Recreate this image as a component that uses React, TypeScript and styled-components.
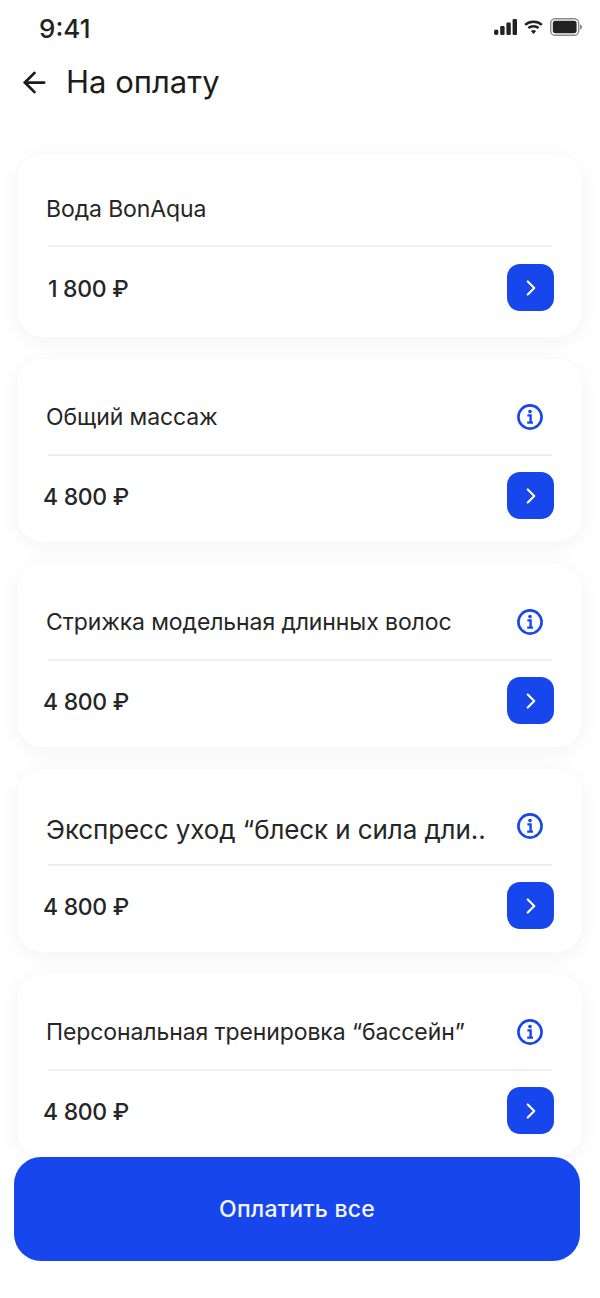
import styled, { createGlobalStyle } from 'styled-components';
import { ArrowLeft, ChevronRight } from 'lucide-react';

const GlobalStyle = createGlobalStyle`
  html, body {
    margin: 0;
    background: #fff;
  }
  * {
    box-sizing: border-box;
  }
`;

const Screen = styled.div`
  position: relative;
  width: 600px;
  height: 1298px;
  overflow: hidden;
  background: #fff;
  color: #1e1e1e;
  font-family: Inter, 'Noto Sans', sans-serif;
`;

const StatusBar = styled.div`
  display: flex;
  justify-content: space-between;
  align-items: center;
  height: 44px;
  padding: 14px 18px 0 39px;
`;

const Time = styled.span`
  font-size: 26px;
  font-weight: 500;
  line-height: 30px;
  color: #222;
`;

const StatusIcons = styled.div`
  display: flex;
  align-items: center;
  gap: 7px;
  margin-top: -4px;
`;

const Header = styled.div`
  display: flex;
  align-items: center;
  gap: 15px;
  height: 40px;
  margin-top: 18px;
  padding-left: 18px;
  color: #1c1c1c;
`;

const Title = styled.h1`
  margin: 0;
  font-size: 31px;
  font-weight: 400;
  line-height: 40px;
`;

const List = styled.div`
  display: flex;
  flex-direction: column;
  gap: 22px;
  margin-top: 52px;
  padding: 0 18px 0 17px;
`;

const Card = styled.div`
  height: 183px;
  padding: 0 30px 0 29px;
  border-radius: 26px;
  background: #fff;
  box-shadow: 0 4px 22px rgba(30, 40, 70, 0.055);
`;

const TopRow = styled.div<{ $height: number; $offset: number }>`
  display: flex;
  justify-content: space-between;
  align-items: center;
  height: ${({ $height }) => $height}px;
  margin-left: 2px;
  padding-top: ${({ $offset }) => $offset}px;
  border-bottom: 2px solid #efefef;
`;

const Name = styled.span<{ $size: number; $drop: number }>`
  margin: ${({ $drop }) => $drop}px 0 0 -2px;
  font-size: ${({ $size }) => $size}px;
  line-height: 30px;
  letter-spacing: -0.1px;
  white-space: nowrap;
  color: #262626;
`;

const InfoButton = styled.span`
  display: flex;
  margin-right: 8px;
  color: #1746ec;
`;

const BottomRow = styled.div<{ $gap: number }>`
  display: flex;
  justify-content: space-between;
  align-items: center;
  height: 47px;
  margin-top: ${({ $gap }) => $gap}px;
`;

const Price = styled.span<{ $indent: number }>`
  margin: 3px 0 0 ${({ $indent }) => $indent}px;
  font-size: 23px;
  font-weight: 500;
  line-height: 30px;
  letter-spacing: -0.3px;
  color: #262626;
`;

const GoButton = styled.button`
  display: flex;
  align-items: center;
  justify-content: center;
  width: 47px;
  height: 47px;
  margin-right: -2px;
  padding: 0;
  border: none;
  border-radius: 13px;
  background: #1746ec;
  color: #fff;
`;

const PayButton = styled.button`
  position: absolute;
  left: 14px;
  top: 1157px;
  width: 566px;
  height: 104px;
  border: none;
  border-radius: 27px;
  background: #1746ec;
  color: #f2f5ff;
  font-family: inherit;
  font-size: 23px;
  font-weight: 500;
  letter-spacing: 0.2px;
`;

const InfoIcon = () => (
  <svg width="28" height="28" viewBox="0 0 28 28" fill="none">
    <circle cx="14" cy="14" r="11.6" stroke="currentColor" strokeWidth="2.6" />
    <circle cx="14" cy="8.6" r="1.8" fill="currentColor" />
    <path d="M11.4 12.4H14.6V19.2M11.2 19.6H17" stroke="currentColor" strokeWidth="2.4" />
  </svg>
);

const SignalIcons = () => (
  <>
    <svg width="23" height="16" viewBox="0 0 23 16" fill="#222">
      <rect x="0" y="10.5" width="4.4" height="5.5" rx="2" />
      <rect x="6.2" y="7" width="4.4" height="9" rx="1.2" />
      <rect x="12.4" y="3.5" width="4.4" height="12.5" rx="1.2" />
      <rect x="18.6" y="0" width="4.4" height="16" rx="1.2" />
    </svg>
    <svg width="19" height="16" viewBox="0 0 20 15" fill="none" stroke="#222" strokeWidth="2.6">
      <path d="M1.2 5.2C6 .8 14 .8 18.8 5.2" />
      <path d="M4.6 8.6c3-2.6 7.8-2.6 10.8 0" />
      <path d="M10 14.6 7.6 11.8c1.4-1 3.4-1 4.8 0z" fill="#222" strokeWidth="0.6" />
    </svg>
    <svg width="32" height="18" viewBox="0 0 32 18" fill="none">
      <rect x="0.7" y="0.7" width="28" height="16.6" rx="4.6" stroke="#8a8a8a" strokeWidth="1.4" />
      <rect x="2.8" y="2.8" width="23.8" height="12.4" rx="2.6" fill="#222" />
      <path d="M30 6.2c1.2.4 2 1.5 2 2.8s-.8 2.4-2 2.8z" fill="#8a8a8a" />
    </svg>
  </>
);

type Bill = {
  name: string;
  price: string;
  nameSize: number;
  rowHeight: number;
  rowGap: number;
  offset: number;
  drop: number;
  indent: number;
  info: boolean;
};

const bills: Bill[] = [
  { name: 'Вода BonAqua', price: '1 800 ₽', nameSize: 23, rowHeight: 93, rowGap: 17, offset: 19, drop: 0, indent: 2, info: false },
  { name: 'Общий массаж', price: '4 800 ₽', nameSize: 23, rowHeight: 97, rowGap: 16, offset: 21, drop: 0, indent: -3, info: true },
  { name: 'Стрижка модельная длинных волос', price: '4 800 ₽', nameSize: 23, rowHeight: 97, rowGap: 16, offset: 21, drop: 0, indent: -3, info: true },
  { name: 'Экспресс уход “блеск и сила дли..', price: '4 800 ₽', nameSize: 26, rowHeight: 97, rowGap: 16, offset: 19, drop: 8, indent: -3, info: true },
  { name: 'Персональная тренировка “бассейн”', price: '4 800 ₽', nameSize: 23, rowHeight: 97, rowGap: 16, offset: 21, drop: 0, indent: -3, info: true }
];

const App = () => (
  <Screen>
    <GlobalStyle />
    <StatusBar>
      <Time>9:41</Time>
      <StatusIcons>
        <SignalIcons />
      </StatusIcons>
    </StatusBar>
    <Header>
      <ArrowLeft size={33} strokeWidth={2} />
      <Title>На оплату</Title>
    </Header>
    <List>
      {bills.map((bill) => (
        <Card key={bill.name}>
          <TopRow $height={bill.rowHeight} $offset={bill.offset}>
            <Name $size={bill.nameSize} $drop={bill.drop}>
              {bill.name}
            </Name>
            {bill.info && (
              <InfoButton>
                <InfoIcon />
              </InfoButton>
            )}
          </TopRow>
          <BottomRow $gap={bill.rowGap}>
            <Price $indent={bill.indent}>{bill.price}</Price>
            <GoButton>
              <ChevronRight size={26} strokeWidth={2} />
            </GoButton>
          </BottomRow>
        </Card>
      ))}
    </List>
    <PayButton>Оплатить все</PayButton>
  </Screen>
);

export default App;
